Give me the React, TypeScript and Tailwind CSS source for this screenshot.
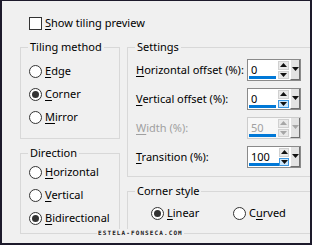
import React from "react";

const Radio = ({ checked }: { checked?: boolean }) => (
  <span className="flex h-[13px] w-[13px] shrink-0 items-center justify-center rounded-full border border-[#333333] bg-white">
    {checked && <span className="h-[7px] w-[7px] rounded-full bg-[#333333]" />}
  </span>
);

const RadioItem = ({
  checked,
  hot,
  rest,
  pre = "",
}: {
  checked?: boolean;
  hot: string;
  rest: string;
  pre?: string;
}) => (
  <div className="flex h-[23px] items-center gap-[3px] whitespace-nowrap">
    <Radio checked={checked} />
    <span>
      {pre}
      <span className="underline underline-offset-2">{hot}</span>
      {rest}
    </span>
  </div>
);

const Tri = ({ up, color }: { up?: boolean; color: string }) => (
  <svg width="7" height="4" viewBox="0 0 7 4">
    <path d={up ? "M0 4 L3.5 0 L7 4 Z" : "M0 0 L7 0 L3.5 4 Z"} fill={color} />
  </svg>
);

const Spinner = ({
  value,
  disabled,
  bar = 27,
  hotDown,
}: {
  value: string;
  disabled?: boolean;
  bar?: number;
  hotDown?: boolean;
}) => {
  const ink = disabled ? "#a6a6a6" : "#111111";
  return (
    <div
      className={
        "flex h-[22px] w-[54px] border " +
        (disabled ? "border-[#cccccc] bg-[#f7f7f7]" : "border-[#8a8a8a] bg-white")
      }
    >
      <div className="flex w-[31px] flex-col">
        <span
          className={
            "pl-[3px] pt-[3px] text-[11px] leading-[13px] " +
            (disabled ? "text-[#a0a0a0]" : "text-black")
          }
        >
          {value}
        </span>
        <span
          className="mb-[1px] ml-[1px] mt-auto h-[3px] bg-[#0078d7]"
          style={{ width: bar }}
        />
      </div>
      <div className="flex w-[11px] flex-col justify-center gap-[1px] py-[1px]">
        <div className="flex h-[9px] items-center justify-center border border-[#d0d0d0] bg-[#e9e9e9]">
          <Tri up color={ink} />
        </div>
        <div
          className={
            "flex h-[9px] items-center justify-center border " +
            (hotDown ? "border-[#3c96e0] bg-[#cce6fa]" : "border-[#d0d0d0] bg-[#e9e9e9]")
          }
        >
          <Tri color={ink} />
        </div>
      </div>
      <div className="ml-[1px] flex w-[10px] items-center justify-center border-b border-l border-r border-b-[#6e6e6e] border-l-white border-r-[#6e6e6e] bg-[#e3e3e3] pb-[2px]">
        <Tri color={ink} />
      </div>
    </div>
  );
};

const Row = ({
  hot,
  rest,
  disabled,
  children,
}: {
  hot: string;
  rest: string;
  disabled?: boolean;
  children: React.ReactNode;
}) => (
  <div className="flex h-[22px] items-center">
    <span className={"w-[111px] whitespace-nowrap " + (disabled ? "text-[#a0a0a0]" : "text-black")}>
      <span className="underline underline-offset-2">{hot}</span>
      {rest}
    </span>
    {children}
  </div>
);

const box = "min-w-0 border border-[#d8d8d8]";
const legend = "ml-[7px] px-[2px] leading-[16px]";

export default function App() {
  return (
    <div
      className="relative h-[245px] w-[312px] overflow-hidden border-b-2 border-l-2 border-r-2 border-t border-[#1d1a2b] bg-[#f0f0f0] text-[11px] text-black"
      style={{ fontFamily: '"Noto Sans", "Segoe UI", sans-serif' }}
    >
      <div className="mt-[16px] flex h-[13px] items-center gap-[3px] pl-[27px]">
        <span className="h-[13px] w-[13px] border border-[#333333] bg-white" />
        <span>
          <span className="underline underline-offset-2">S</span>how tiling preview
        </span>
      </div>

      <div className="mt-[9px] grid grid-cols-[100px_183px] gap-x-[7px] pl-[18px]">
        <div className="flex min-w-0 flex-col gap-[6px]">
          <fieldset className={box + " h-[100px]"}>
            <legend className={legend}>Tiling method</legend>
            <div className="pl-[8px] pt-[5px]">
              <RadioItem hot="E" rest="dge" />
              <RadioItem checked hot="C" rest="orner" />
              <RadioItem hot="M" rest="irror" />
            </div>
          </fieldset>
          <fieldset className={box + " h-[89px]"}>
            <legend className={legend}>Direction</legend>
            <div className="pl-[8px]">
              <RadioItem hot="H" rest="orizontal" />
              <RadioItem hot="V" rest="ertical" />
              <RadioItem checked hot="B" rest="idirectional" />
            </div>
          </fieldset>
        </div>

        <div className="flex min-w-0 flex-col gap-[6px]">
          <fieldset className={box + " h-[138px] border-r-0"}>
            <legend className={legend}>Settings</legend>
            <div className="flex flex-col gap-[7px] pl-[8px] pt-[4px]">
              <Row hot="H" rest="orizontal offset (%):">
                <Spinner value="0" />
              </Row>
              <Row hot="V" rest="ertical offset (%):">
                <Spinner value="0" hotDown />
              </Row>
              <Row hot="W" rest="idth (%):" disabled>
                <Spinner value="50" disabled />
              </Row>
              <Row hot="T" rest="ransition (%):">
                <Spinner value="100" bar={31} hotDown />
              </Row>
            </div>
          </fieldset>
          <fieldset className={box + " h-[51px] border-r-0"}>
            <legend className={legend}>Corner style</legend>
            <div className="flex items-center pl-[23px] pt-[3px]">
              <div className="w-[82px]">
                <RadioItem checked hot="L" rest="inear" />
              </div>
              <RadioItem pre="C" hot="u" rest="rved" />
            </div>
          </fieldset>
        </div>
      </div>

      <span
        className="absolute left-[95px] top-[228px] bg-[#f0f0f0] px-[1px] text-[6px] font-bold leading-[7px] tracking-[1.1px] text-[#1a1a1a]"
        style={{ fontFamily: '"DejaVu Sans Mono", monospace' }}
      >
        ESTELA-FONSECA.COM
      </span>
    </div>
  );
}
